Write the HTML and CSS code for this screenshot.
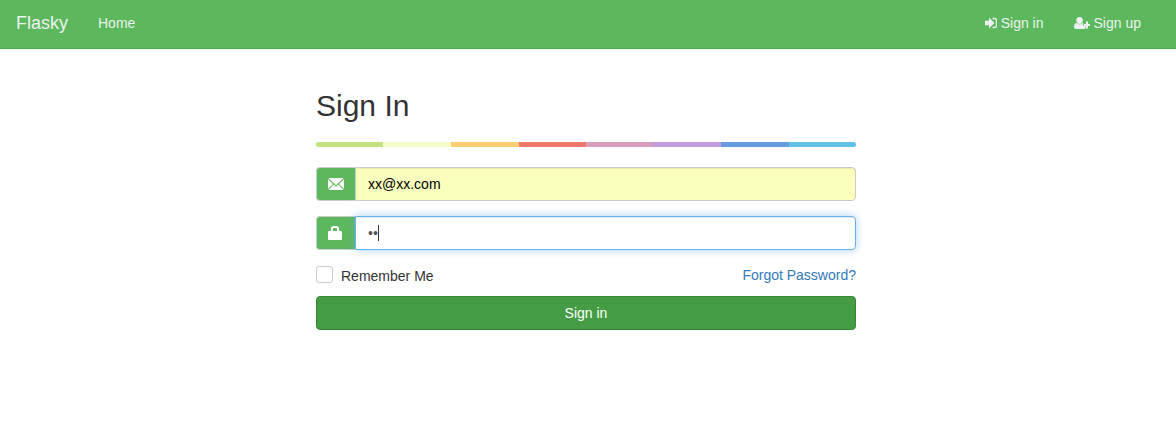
FILE: index.html
```html
<!DOCTYPE html>
<html lang="en">
<head>
<meta charset="utf-8">
<title>Sign In</title>
<link rel="stylesheet" href="styles.css">
</head>
<body>
<nav class="navbar">
  <a class="brand" href="#">Flasky</a>
  <a class="nav-link" href="#">Home</a>
  <div class="nav-right">
    <a class="nav-link" href="#"><svg class="icon" viewBox="0 0 12 12" width="12" height="12"><path fill="currentColor" d="M0 3.700h4V.6L9.400 6 4 11.400V8.300H0z"/><path fill="none" stroke="currentColor" stroke-width="1.300" d="M7.500 1.500h2.200q1.700 0 1.700 1.500v6q0 1.500-1.700 1.500H7.500"/></svg>Sign in</a>
    <a class="nav-link" href="#"><svg class="icon" viewBox="0 0 16 12" width="16" height="12"><path fill="currentColor" d="M5.600 0C7.700 0 8.900 1.300 8.900 3.200S7.700 7 5.600 7 2.300 5.100 2.300 3.200 3.500 0 5.600 0zM2.700 6c1.600 1.800 4.200 1.800 5.800 0l.8.200v2.700h2.300v2.500q-.6.600-1.700.600H1.900Q0 12 0 10.100C0 7.800.7 6 2.700 6z"/><path fill="currentColor" d="M12 4.500h2v2.500h2v2h-2v2.500h-2V9h-2V7h2z"/></svg>Sign up</a>
  </div>
</nav>
<main class="panel">
  <h2 class="title">Sign In</h2>
  <div class="stripe"></div>
  <div class="input-group">
    <span class="addon"><svg viewBox="0 0 16 12" width="16" height="12"><path fill="currentColor" d="M.4 0h15.200L8 7.200zM0 1l5 5-5 5zM16 1v10l-5-5zM5.700 6.500L8 8.700l2.300-2.200 5.300 5.500H.4z"/></svg></span>
    <div class="field email">xx@xx.com</div>
  </div>
  <div class="input-group">
    <span class="addon"><svg class="lock" viewBox="0 0 14 14" width="14" height="14"><path fill="currentColor" fill-rule="evenodd" d="M2.800 5V3.200Q2.800 0 5.500 0h3q2.700 0 2.700 3.200V5H13q1 0 1 1v7q0 1-1 1H1q-1 0-1-1V6q0-1 1-1zm2.200 0h4V3.300Q9 2 8 2H6Q5 2 5 3.300z"/></svg></span>
    <div class="field focused">••<span class="caret"></span></div>
  </div>
  <div class="options">
    <label class="remember"><span class="box"></span>Remember Me</label>
    <a class="forgot" href="#">Forgot Password?</a>
  </div>
  <button class="submit" type="button">Sign in</button>
</main>
</body>
</html>
```
FILE: styles.css
```css
* { box-sizing: border-box; }
body {
  margin: 0;
  background: #fff;
  color: #333;
  font: 14px/20px "Liberation Sans", Arial, sans-serif;
}
a { text-decoration: none; }
svg { flex: none; }
.navbar {
  display: flex;
  height: 49px;
  padding: 0 20px 2px 16px;
  background: #5cb85c;
  border-bottom: 1px solid #4cae4c;
}
.brand, .nav-link {
  display: flex;
  align-items: center;
  color: #ecf0f1;
}
.brand { width: 67px; font-size: 18px; }
.nav-link { padding: 0 15px; }
.nav-right { display: flex; margin-left: auto; }
.icon { margin-right: 4px; }
.panel {
  width: 540px;
  margin: 40px 0 0 316px;
}
.title {
  margin: 0 0 20px;
  font-size: 30px;
  font-weight: 400;
  line-height: 33px;
}
.stripe {
  height: 5px;
  margin-bottom: 20px;
  border-radius: 5px;
  background: linear-gradient(to right, #c4e17f 0 12.5%, #f7fdca 12.5% 25%, #fecf71 25% 37.5%, #f0776c 37.5% 50%, #db9dbe 50% 62.5%, #c49cde 62.5% 75%, #669ae1 75% 87.5%, #62c2e4 87.5%);
}
.input-group { display: flex; height: 34px; margin-bottom: 15px; }
.addon {
  display: flex;
  align-items: center;
  justify-content: center;
  width: 39px;
  border: 1px solid #ccc;
  border-right: 0;
  border-radius: 4px 0 0 4px;
  background: #5cb85c;
  color: #fff;
}
.lock { margin-right: 2px; }
.field {
  display: flex;
  align-items: center;
  flex: 1;
  padding: 0 12px;
  border: 1px solid #ccc;
  border-radius: 0 4px 4px 0;
  color: #555;
  box-shadow: inset 0 1px 1px rgba(0, 0, 0, .075);
}
.email { background: #faffbd; color: #000; }
.focused {
  border-color: #66afe9;
  box-shadow: inset 0 1px 1px rgba(0, 0, 0, .075), 0 0 8px rgba(102, 175, 233, .6);
}
.caret { width: 1px; height: 16px; background: #333; }
.options {
  display: flex;
  justify-content: space-between;
  height: 31px;
}
.remember { display: flex; padding-top: 1px; }
.box {
  width: 17px;
  height: 17px;
  margin-right: 8px;
  border: 1px solid #ccc;
  border-radius: 3px;
}
.forgot { color: #337ab7; }
.submit {
  display: block;
  width: 100%;
  height: 34px;
  padding: 0;
  border: 1px solid #398439;
  border-radius: 4px;
  background: #449d44;
  color: #fff;
  font: inherit;
}
```
